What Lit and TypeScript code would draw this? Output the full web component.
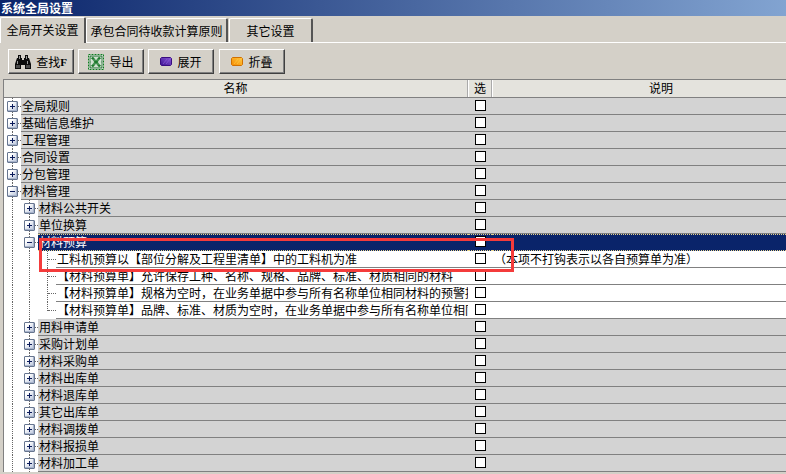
import { LitElement, html, css, svg, nothing } from "lit";
import { customElement } from "lit/decorators.js";

type Row = { t: string; lvl: 1 | 2 | 3; exp?: "+" | "-"; note?: string; sel?: boolean; last?: boolean };

const ROWS: Row[] = [
  { t: "全局规则", lvl: 1, exp: "+" },
  { t: "基础信息维护", lvl: 1, exp: "+" },
  { t: "工程管理", lvl: 1, exp: "+" },
  { t: "合同设置", lvl: 1, exp: "+" },
  { t: "分包管理", lvl: 1, exp: "+" },
  { t: "材料管理", lvl: 1, exp: "-" },
  { t: "材料公共开关", lvl: 2, exp: "+" },
  { t: "单位换算", lvl: 2, exp: "+" },
  { t: "材料预算", lvl: 2, exp: "-", sel: true },
  { t: "工料机预算以【部位分解及工程里清单】中的工料机为准", lvl: 3, note: "（本项不打钩表示以各自预算单为准）" },
  { t: "【材料预算单】允许保存工种、名称、规格、品牌、标准、材质相同的材料", lvl: 3 },
  { t: "【材料预算单】规格为空时，在业务单据中参与所有名称单位相同材料的预警提示", lvl: 3 },
  { t: "【材料预算单】品牌、标准、材质为空时，在业务单据中参与所有名称单位相同材料的预警提示", lvl: 3, last: true },
  { t: "用料申请单", lvl: 2, exp: "+" },
  { t: "采购计划单", lvl: 2, exp: "+" },
  { t: "材料采购单", lvl: 2, exp: "+" },
  { t: "材料出库单", lvl: 2, exp: "+" },
  { t: "材料退库单", lvl: 2, exp: "+" },
  { t: "其它出库单", lvl: 2, exp: "+" },
  { t: "材料调拨单", lvl: 2, exp: "+" },
  { t: "材料报损单", lvl: 2, exp: "+" },
  { t: "材料加工单", lvl: 2, exp: "+" },
];

const binoculars = svg`<svg width="16" height="14" viewBox="0 0 16 14">
  <path d="M3 0h3v3h1v2h2V3h1V0h3v3h1l1 3 1 3v5h-6v-4H6v4H0V9l1-3 1-3h1z" fill="#0c0c0c"/>
  <path d="M1 10h4v3H1zM11 10h4v3h-4z" fill="#4a4a4a"/>
  <path d="M4 1h1v3H4zM11 1h1v3h-1zM2 6h1v3H2zM12 6h1v3h-1z" fill="#9a9a9a"/>
</svg>`;
const excel = svg`<svg width="16" height="16" viewBox="0 0 16 16">
  <rect x="0.5" y="0.5" width="15" height="15" fill="#fff" stroke="#0f7a1f" stroke-dasharray="2 1"/>
  <rect x="2" y="2" width="12" height="12" fill="#cfe0cf" stroke="#1c6a2c"/>
  <path d="M4 3.5l8 9M12 3.5l-8 9" stroke="#1c7a2c" stroke-width="2.6"/>
  <path d="M2 6h12M2 10h12" stroke="#fff" stroke-width=".6" opacity=".6"/>
</svg>`;
const gem = (a: string, b: string, e: string) => svg`<svg width="12" height="9" viewBox="0 0 12 9">
  <defs><linearGradient id=${"g" + a.slice(1)} x1="0" y1="1" x2="1" y2="0"><stop offset="0" stop-color=${a}/><stop offset="1" stop-color=${b}/></linearGradient></defs>
  <path d="M1.5.5h9l1 1v6l-1 1h-9l-1-1v-6z" fill=${"url(#g" + a.slice(1) + ")"} stroke=${e}/>
  <path d="M3 7l4-5M6 7l4-5" stroke=${b} stroke-width="1" opacity=".7"/>
</svg>`;

@customElement("app-tree-row")
class TreeRow extends LitElement {
  static properties = { row: { attribute: false } };
  row!: Row;

  static styles = css`
    :host { display: block; }
    .row { display: flex; height: 17px; box-sizing: border-box; background: #fff; }
    .gutter { position: relative; flex: none; height: 17px; }
    .l1 { width: 17px; }
    .l2 { width: 34px; }
    .l3 { width: 52px; }
    .v { position: absolute; top: 0; bottom: 0; width: 0; border-left: 1px dotted #666; }
    .v.half { bottom: 8px; }
    .h { position: absolute; top: 8px; height: 0; border-top: 1px dotted #666; }
    .box {
      position: absolute; top: 3px; width: 11px; height: 11px; box-sizing: border-box;
      border: 1px solid #66758f; border-radius: 1px;
      background: linear-gradient(135deg, #ffffff 25%, #b4c0d8 100%);
      box-shadow: inset -1px -1px 0 #a8b4cc;
    }
    .box i { position: absolute; left: 2px; top: 4px; width: 5px; height: 1px; background: #0a1a5a; }
    .box b { position: absolute; left: 4px; top: 2px; width: 1px; height: 5px; background: #0a1a5a; }
    .name {
      flex: none; box-sizing: border-box; height: 17px; overflow: hidden; white-space: nowrap;
      padding-left: 1px; line-height: 16px; border-bottom: 1px solid #808080; background: #d3d3d3;
    }
    .n1 { width: 447px; }
    .n2 { width: 430px; }
    .n3 { width: 412px; background: #fff; }
    .cell {
      flex: none; box-sizing: border-box; height: 17px; width: 24px; padding: 2px 0 0 7px;
      border-bottom: 1px solid #808080; background: #d3d3d3;
    }
    .check { width: 11px; height: 11px; box-sizing: border-box; border: 1px solid #000; background: #fff; }
    .note {
      flex: 1; box-sizing: border-box; height: 17px; border-bottom: 1px solid #808080; background: #d3d3d3;
      line-height: 16px; padding-left: 2px; white-space: nowrap;
    }
    .white .cell, .white .note { background: #fff; }
    .sel .name, .sel .cell, .sel .note {
      background: #0a246a; color: #fff; border-top: 1px dotted #e8d58c; border-bottom: 1px dotted #e8d58c;
    }
    .sel .name { line-height: 14px; }
    .sel .cell { padding-top: 1px; }
  `;

  render() {
    const r = this.row;
    return html`<div class="row ${r.lvl === 3 ? "white" : ""} ${r.sel ? "sel" : ""}">
      <div class="gutter l${r.lvl}">
        <div class="v" style="left:8px"></div>
        ${r.lvl >= 2 ? html`<div class="v" style="left:25px"></div>` : nothing}
        ${r.lvl === 3
          ? html`<div class="v ${r.last ? "half" : ""}" style="left:43px"></div>
              <div class="h" style="left:44px;width:8px"></div>`
          : html`<div class="h" style="left:${r.lvl === 1 ? 14 : 31}px;width:3px"></div>`}
        ${r.exp
          ? html`<div class="box" style="left:${r.lvl === 1 ? 3 : 20}px"><i></i>${r.exp === "+" ? html`<b></b>` : nothing}</div>`
          : nothing}
      </div>
      <div class="name n${r.lvl}">${r.t}</div>
      <div class="cell"><div class="check"></div></div>
      <div class="note">${r.note ?? ""}</div>
    </div>`;
  }
}

@customElement("app-root")
export class AppRoot extends LitElement {
  static styles = css`
    :host {
      display: block; width: 786px; height: 474px; overflow: hidden; position: relative;
      background: #d4d0c8; color: #000;
      font: 12px "Noto Sans CJK SC", "Liberation Sans", sans-serif;
    }
    .title {
      height: 16px; line-height: 15px; padding-left: 1px; color: #fff; font-weight: 700;
      background: linear-gradient(90deg, #0a246a, #a6caf0 130%);
    }
    .tabs { display: flex; align-items: flex-end; height: 27px; border-bottom: 1px solid #fff; box-sizing: border-box; }
    .tab {
      box-sizing: border-box; height: 24px; line-height: 23px; text-align: center; margin-right: 1px;
      border: 1px solid #fff; border-right: 2px solid #555; border-bottom: 0; border-radius: 2px 2px 0 0;
    }
    .tab.on { height: 26px; line-height: 24px; width: 86px; margin: 0 0 -1px; background: #d4d0c8; position: relative; }
    .t2 { width: 142px; }
    .t3 { width: 84px; }
    .toolbar { display: flex; padding: 6px 0 0 8px; height: 36px; box-sizing: border-box; }
    .btn {
      box-sizing: border-box; width: 66px; height: 25px; margin-right: 4px;
      border: 1px solid; border-color: #fff #404040 #404040 #fff;
      box-shadow: inset -1px -1px 0 #808080;
      display: flex; align-items: center; justify-content: center; gap: 5px; font-size: 12px;
    }
    .btn.b4 { margin-left: 1px; }
    .btn .ico { display: flex; }
    .btn .f { font: 700 11px "Liberation Serif", serif; margin-left: -5px; }
    .grid { margin-left: 3px; border-left: 1px solid #808080; background: #fff; }
    .head {
      display: flex; height: 19px; box-sizing: border-box; background: #e4e3dd;
      border-top: 1px solid #808080; border-bottom: 1px solid #808080; line-height: 16px; text-align: center;
    }
    .hn { width: 464px; box-sizing: border-box; border-right: 1px solid #aaa; }
    .hc { width: 24px; box-sizing: border-box; border-left: 1px solid #fff; border-right: 1px solid #aaa; }
    .hd { flex: 1; border-left: 1px solid #fff; padding-left: 43px; }
    .mark {
      position: absolute; left: 39px; top: 238px; width: 475px; height: 34px; box-sizing: border-box;
      border: 3px solid #f43b3b; pointer-events: none;
    }
  `;

  render() {
    return html`
      <div class="title">系统全局设置</div>
      <div class="tabs">
        <div class="tab on">全局开关设置</div>
        <div class="tab t2">承包合同待收款计算原则</div>
        <div class="tab t3">其它设置</div>
      </div>
      <div class="toolbar">
        <div class="btn"><span class="ico">${binoculars}</span><span>查找</span><span class="f">F</span></div>
        <div class="btn"><span class="ico">${excel}</span><span>导出</span></div>
        <div class="btn"><span class="ico">${gem("#3a1090", "#8a5ad8", "#3a0c80")}</span><span>展开</span></div>
        <div class="btn b4"><span class="ico">${gem("#f58a00", "#ffc840", "#d07000")}</span><span>折叠</span></div>
      </div>
      <div class="grid">
        <div class="head">
          <div class="hn">名称</div>
          <div class="hc">选</div>
          <div class="hd">说明</div>
        </div>
        ${ROWS.map((r) => html`<app-tree-row .row=${r}></app-tree-row>`)}
      </div>
      <div class="mark"></div>
    `;
  }
}
void TreeRow;
